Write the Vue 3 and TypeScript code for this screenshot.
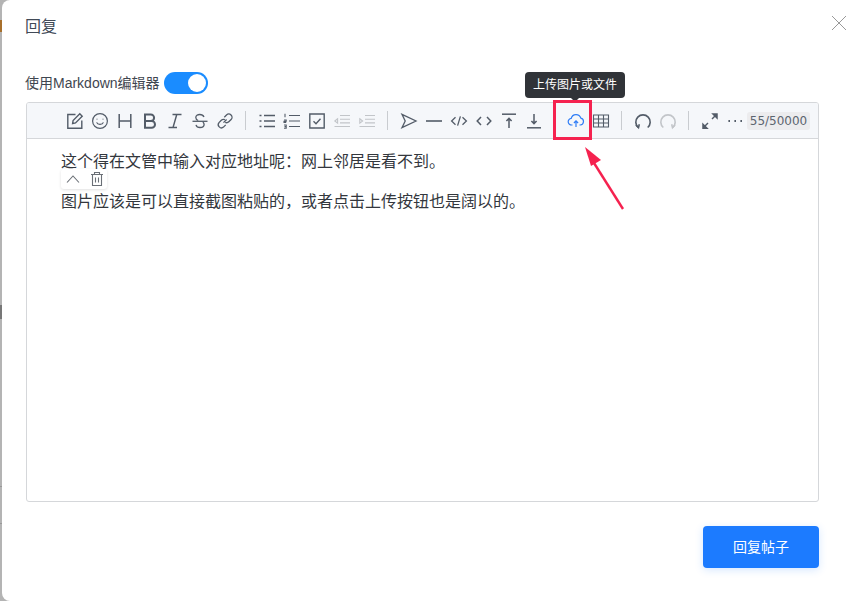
<script setup lang="ts">
interface Tool { kind: 'icon' | 'sep'; paths?: string[]; tone?: string; fill?: string; sw?: number }
const i = (paths: string[], tone = '', sw = 1.4, fill = ''): Tool => ({ kind: 'icon', paths, tone, sw, fill })
const sep: Tool = { kind: 'sep' }
const tools: Tool[] = [
  i(['M9.5 2.5H1.8v13.7h14V8.5', 'M6.6 11.5l.5-3L13.8 1.8l2.4 2.4-6.7 6.7z']),
  i(['M9 1.6a7.4 7.4 0 1 0 0 14.8 7.4 7.4 0 0 0 0-14.8z', 'M5.6 10.4c1 2.7 5.8 2.7 6.8 0', 'M6 6.8v.8M12 6.8v.8'], '', 1.2),
  i(['M3.2 2v14M14.8 2v14M3.2 9h11.6'], '', 1.5),
  i(['M4 2.4h5.8a3.3 3.3 0 0 1 0 6.6H4zM4 9h6.6a3.4 3.4 0 0 1 0 6.8H4z'], '', 2),
  i(['M6.5 2.4h9M2.5 15.6h8.5M10.8 2.4L7 15.6'], '', 1.5),
  i(['M1.5 9.3h15', 'M13 5c-.8-1.7-2.4-2.5-4.2-2.5-2.3 0-4 1.2-4 3 0 1.4.9 2.4 2.4 3', 'M5 12.8c.5 1.8 2 2.7 4 2.7 2.4 0 4.1-1.1 4.1-3 0-1-.4-1.9-1.2-2.6'], '', 1.3),
  i(['M7.5 10.6l3.1-3.1', 'M8.3 5.2l2.2-2.2a3.2 3.2 0 0 1 4.6 4.5l-2.3 2.3a3.2 3.2 0 0 1-3.6.6', 'M9.7 12.9l-2.2 2.2A3.2 3.2 0 0 1 3 10.6l2.3-2.3a3.2 3.2 0 0 1 3.6-.6'], '', 1.3),
  sep,
  i(['M6 3.5h11M6 9h11M6 14.5h11', 'M1.5 3.5h2M1.5 9h2M1.5 14.5h2'], '', 1.5),
  i(['M6 3.5h11M6 9h11M6 14.5h11', 'M2 1.8v3.4', 'M1 8h2.2v1.2H1v1.2h2.2', 'M1 13h2.2v3.2H1M1.5 14.6h1.7'], '', 1.1),
  i(['M1.8 2h14.4v14H1.8z', 'M5.5 9.2l2.5 2.5 4.5-5'], '', 1.4),
  i(['M7 3.5h10M7 7.2h10M7 10.9h10M1.5 14.5h15.5', 'M4.6 6.8L1.8 9l2.8 2.2z'], 'muted', 1.1),
  i(['M7 3.5h10M7 7.2h10M7 10.9h10M1.5 14.5h15.5', 'M1.8 6.8L4.6 9l-2.8 2.2z'], 'muted', 1.1),
  sep,
  i(['M2 2.3L16 9 2 15.7 5.2 9z'], '', 1.3),
  i(['M1 9h16'], '', 1.6),
  i(['M5.5 5.2L1.6 9l3.9 3.8M12.5 5.2L16.4 9l-3.9 3.8M10.4 4.4L7.6 13.6'], '', 1.3),
  i(['M6 5L2.2 9 6 13M12 5l3.8 4-3.8 4'], '', 1.5),
  i(['M2 2.2h14', 'M9 16V6.5M6.4 9L9 6.4 11.6 9'], '', 1.5),
  i(['M2 15.8h14', 'M9 2v9.5M6.4 9L9 11.6 11.6 9'], '', 1.5),
  sep,
  i(['M5.5 13H4.8a3.3 3.3 0 0 1-.6-6.6 5 5 0 0 1 9.6-.3 3.5 3.5 0 0 1-.6 6.9h-.7', 'M9 15V9M6.9 11L9 8.9l2.1 2.1'], 'blue', 1.2),
  i(['M1.5 3h15v12h-15z', 'M1.5 7h15M1.5 11h15M6.5 3v12M11.5 3v12'], '', 1.1),
  sep,
  i(['M4.3 15.5A7.2 7.2 0 1 1 13.7 15.5', 'M2 13l2.5 2.7.8-3.4'], '', 1.6),
  i(['M4.3 15.5A7.2 7.2 0 1 1 13.7 15.5', 'M16 13l-2.5 2.7-.8-3.4'], 'muted', 1.6),
  sep,
  i(['M2.5 15.5L7 11', 'M11 7l4.5-4.5', 'M2 12.2v4h4z', 'M12 2h4v4z'], '', 1.5, 'on'),
  i(['M2.4 9h1.6M8.4 9h1.6M14.4 9h1.6'], '', 2),
]
</script>

<template>
  <div class="page">
    <div class="edge-marks">
      <span class="mark orange"></span>
      <span class="mark dark"></span>
      <span class="mark dim"></span>
    </div>
    <section class="dialog">
      <header class="head">
        <h2>回复</h2>
        <svg class="close" width="16" height="16" viewBox="0 0 16 16"><path d="M1 1l14 14M15 1L1 15" /></svg>
      </header>
      <div class="body">
        <div class="switch-row">
          <span class="label">使用Markdown编辑器</span>
          <span class="switch"><i></i></span>
        </div>
        <div class="editor">
          <div class="toolbar">
            <template v-for="(t, n) in tools" :key="n">
              <span v-if="t.kind === 'sep'" class="sep"></span>
              <span v-else class="tool" :class="t.tone">
                <svg width="18" height="18" viewBox="0 0 18 18" :class="{ solid: t.fill }">
                  <path v-for="(d, k) in t.paths" :key="k" :d="d" :stroke-width="t.sw" />
                </svg>
              </span>
            </template>
            <span class="counter">55/50000</span>
          </div>
          <div class="content">
            <p>这个得在文管中输入对应地址呢：网上邻居是看不到。</p>
            <div class="block-tools">
              <svg width="16" height="16" viewBox="0 0 16 16"><path d="M2 11.5L8 5l6 6.5" /></svg>
              <svg width="16" height="16" viewBox="0 0 16 16"><path d="M2 3.5h12M5.5 3.5V1.5h5v2M3.5 3.5v11h9v-11M6.5 6.5v5M9.5 6.5v5" /></svg>
            </div>
            <p>图片应该是可以直接截图粘贴的，或者点击上传按钮也是阔以的。</p>
          </div>
        </div>
        <div class="foot">
          <button type="button">回复帖子</button>
        </div>
      </div>
    </section>
    <div class="tooltip">上传图片或文件</div>
    <div class="redbox"></div>
    <svg class="arrow" width="60" height="80" viewBox="0 0 60 80">
      <path d="M41 64L12 18" class="shaft" />
      <path d="M3 2L19 15 9 21z" class="head-tip" />
    </svg>
  </div>
</template>

<style>
html, body { margin: 0; background: #b4b4b4; overflow: hidden; }
</style>

<style scoped>
.page {
  position: relative;
  width: 854px;
  height: 601px;
  padding-left: 2px;
  box-sizing: border-box;
  display: flex;
  overflow: hidden;
  font-family: "Liberation Sans", "Noto Sans CJK SC", sans-serif;
}
.edge-marks { position: absolute; left: 0; top: 0; width: 2px; height: 601px; }
.mark { position: absolute; left: 0; width: 2px; }
.mark.orange { top: 20px; height: 12px; background: #a8702c; }
.mark.dark { top: 305px; height: 14px; background: #777; }
.mark.dim { top: 486px; height: 36px; border-top: 1px solid #999; border-bottom: 1px solid #999; }
.dialog {
  flex: 1;
  background: #fff;
  border-radius: 8px 0 0 8px;
  display: flex;
  flex-direction: column;
  min-width: 0;
}
.head {
  height: 49px;
  padding: 0 23px;
  display: flex;
  align-items: center;
  justify-content: space-between;
  flex: none;
}
h2 {
  margin: 0;
  font-size: 16px;
  font-weight: 400;
  color: #414a57;
}
.close {
  position: absolute;
  left: 831px;
  top: 15px;
  fill: none;
  stroke: #999;
  stroke-width: 1;
}
.body { padding: 23px 35px 0 24px; }
.switch-row {
  height: 22px;
  display: flex;
  align-items: center;
  gap: 4px;
  font-size: 14px;
  color: #3f4650;
  margin-left: -1px;
}
.label { padding-bottom: 3px; }
.switch {
  width: 44px;
  height: 22px;
  border-radius: 11px;
  background: #1a8cff;
  position: relative;
  flex: none;
}
.switch i {
  position: absolute;
  right: 2px;
  top: 2px;
  width: 18px;
  height: 18px;
  border-radius: 50%;
  background: #fff;
}
.editor {
  margin-top: 8px;
  height: 400px;
  box-sizing: border-box;
  border: 1px solid #d5d7da;
  border-radius: 3px;
}
.toolbar {
  height: 35px;
  background: #f5f7fa;
  border-bottom: 1px solid #d5d7da;
  border-radius: 2px 2px 0 0;
  display: flex;
  align-items: center;
  justify-content: flex-end;
  padding-right: 8px;
}
.tool {
  width: 25px;
  height: 25px;
  display: flex;
  align-items: center;
  justify-content: center;
  flex: none;
}
.tool svg { fill: none; stroke: #535c68; }
.tool svg.solid { fill: #535c68; }
.tool.muted svg { stroke: #c2c5c9; }
.tool.blue svg { stroke: #2f7df6; }
.sep {
  width: 1px;
  height: 19px;
  margin: 0 8px;
  background: #c9ccd0;
  flex: none;
}
.counter {
  width: 63px;
  height: 18px;
  line-height: 18px;
  text-align: center;
  background: #ececee;
  border-radius: 3px;
  font-family: "DejaVu Sans", sans-serif;
  font-size: 12px;
  color: #5c6570;
  flex: none;
}
.content {
  position: relative;
  padding: 12px 34px 0;
  font-size: 16px;
  color: #33373d;
}
.content p {
  margin: 0 0 18px;
  line-height: 22px;
}
.block-tools {
  position: absolute;
  left: 34px;
  top: 30px;
  width: 46px;
  height: 20px;
  display: flex;
  align-items: center;
  justify-content: center;
  gap: 8px;
  padding-left: 1px;
  box-sizing: border-box;
  background: #fff;
  border-radius: 3px;
  box-shadow: 0 1px 3px rgba(0, 0, 0, .12);
}
.block-tools svg { fill: none; stroke: #6a6f76; stroke-width: 1.1; }
.foot {
  margin-top: 24px;
  display: flex;
  justify-content: flex-end;
}
button {
  width: 116px;
  height: 42px;
  padding: 0 0 2px;
  border: 0;
  border-radius: 4px;
  background: #1c7bff;
  box-shadow: 0 2px 8px rgba(28, 123, 255, .18);
  color: #fff;
  font: 14px "Liberation Sans", "Noto Sans CJK SC", sans-serif;
}
.tooltip {
  position: absolute;
  left: 525px;
  top: 72px;
  width: 100px;
  height: 26px;
  line-height: 27px;
  text-align: center;
  background: #303338;
  border-radius: 4px;
  color: #fff;
  font-size: 12px;
}
.tooltip::after {
  content: "";
  position: absolute;
  left: 46px;
  top: 26px;
  border: 4px solid transparent;
  border-top-color: #303338;
}
.redbox {
  position: absolute;
  left: 553px;
  top: 100px;
  width: 39px;
  height: 40px;
  box-sizing: border-box;
  border: 3px solid #f5224f;
}
.arrow { position: absolute; left: 582px; top: 145px; fill: #f5224f; stroke: none; }
.arrow .shaft { fill: none; stroke: #f5224f; stroke-width: 2.4; }
</style>
